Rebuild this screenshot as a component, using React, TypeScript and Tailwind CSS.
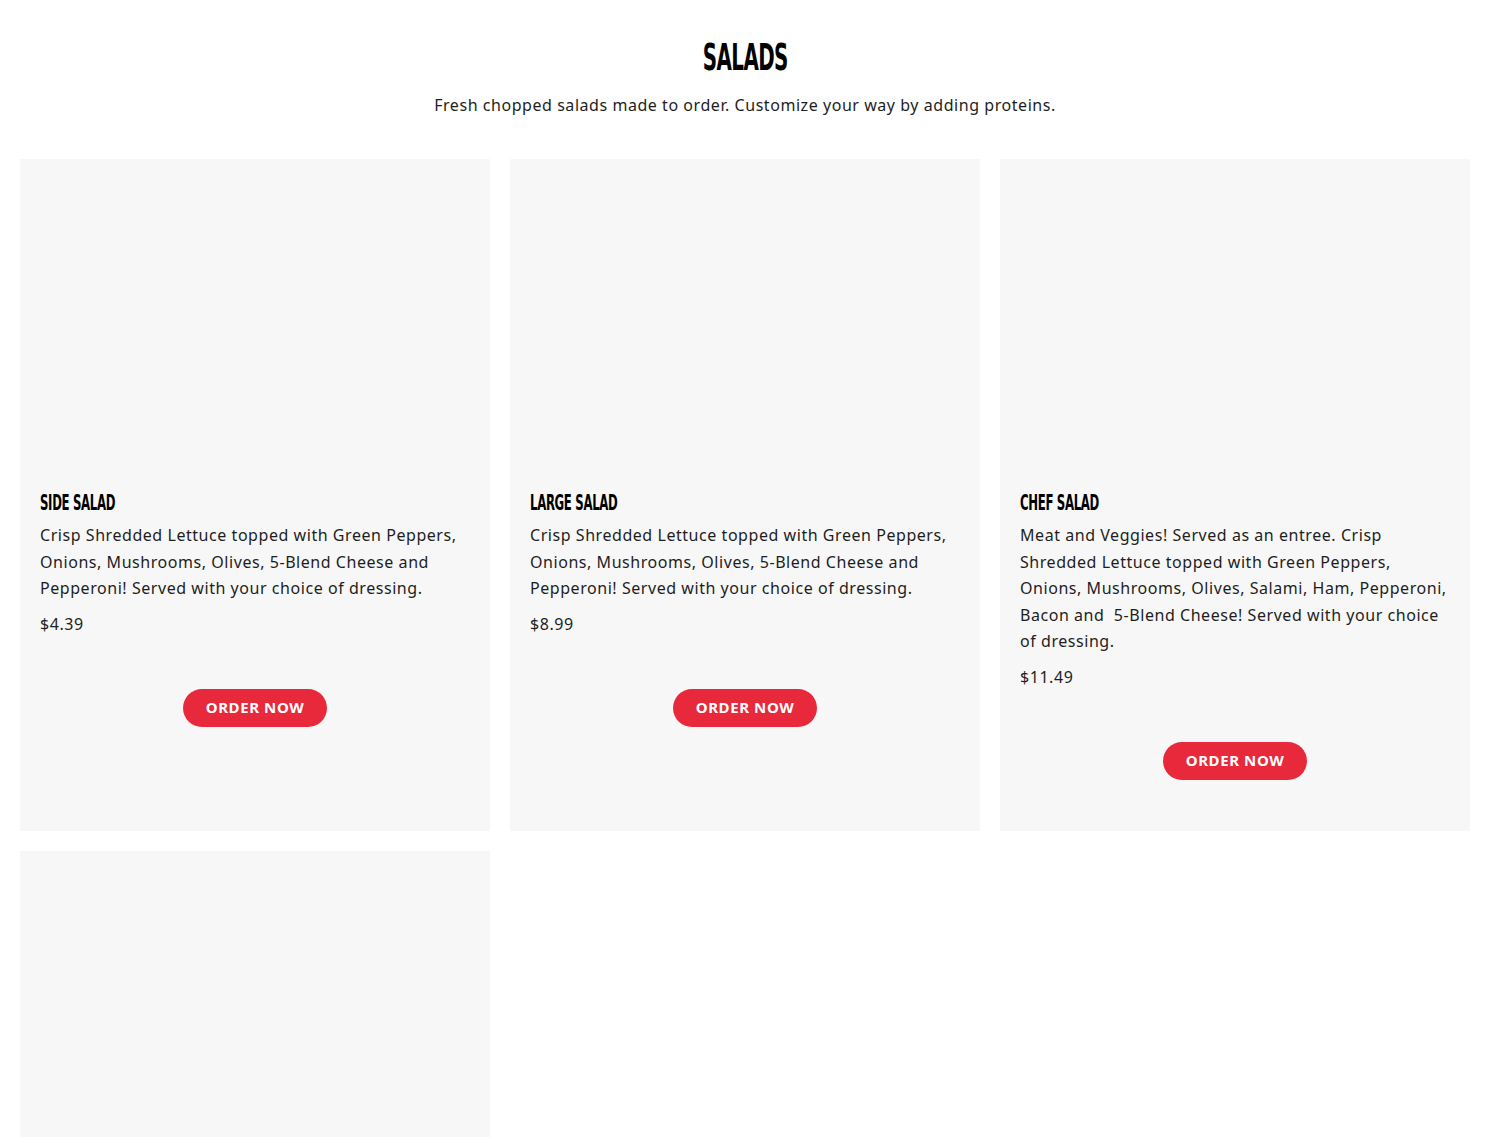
import React from 'react'

interface Salad {
  name: string
  description: string
  price: string
}

const salads: Salad[] = [
  {
    name: 'Side Salad',
    description:
      'Crisp Shredded Lettuce topped with Green Peppers, Onions, Mushrooms, Olives, 5-Blend Cheese and Pepperoni! Served with your choice of dressing.',
    price: '$4.39',
  },
  {
    name: 'Large Salad',
    description:
      'Crisp Shredded Lettuce topped with Green Peppers, Onions, Mushrooms, Olives, 5-Blend Cheese and Pepperoni! Served with your choice of dressing.',
    price: '$8.99',
  },
  {
    name: 'Chef Salad',
    description:
      'Meat and Veggies! Served as an entree. Crisp Shredded Lettuce topped with Green Peppers, Onions, Mushrooms, Olives, Salami, Ham, Pepperoni, Bacon and \u00a05-Blend Cheese! Served with your choice of dressing.',
    price: '$11.49',
  },
]

const bodyFont = { fontFamily: '"Noto Sans", "DejaVu Sans", sans-serif' }

const Heading: React.FC<{ children: React.ReactNode; className?: string }> = ({
  children,
  className,
}) => (
  <span
    className={`inline-block font-bold uppercase tracking-tight ${className ?? ''}`}
    style={{ fontFamily: '"DejaVu Sans Condensed", "DejaVu Sans", sans-serif' }}
  >
    {children}
  </span>
)

const SaladCard: React.FC<{ salad: Salad }> = ({ salad }) => (
  <div className="flex flex-col bg-[#f7f7f7]">
    <div className="h-[310px]" />
    <div className="px-5 pt-5 pb-[51px]">
      <h3 className="h-[26px] text-[21px] leading-[26px] text-black">
        <Heading className="origin-left scale-x-[0.62]">{salad.name}</Heading>
      </h3>
      <p className="mt-[7px] text-[16px] leading-[26.5px] tracking-[0.55px] text-[#1e1e1e]">
        {salad.description}
      </p>
      <p className="mt-[9px] text-[16px] leading-[26px] tracking-[0.55px] text-[#1e1e1e]">
        {salad.price}
      </p>
      <div className="mt-[52px] flex justify-center">
        <button className="h-[38px] w-[144px] rounded-full bg-[#e8293b] text-[15px] font-bold uppercase tracking-[0.6px] text-white">
          Order Now
        </button>
      </div>
    </div>
  </div>
)

export default function App() {
  return (
    <div className="min-h-screen bg-white" style={bodyFont}>
      <div className="w-[1490px]">
        <div className="pt-[33px] text-center">
          <h2 className="h-[44px] text-[38px] leading-[44px] text-black">
            <Heading className="origin-center scale-x-[0.58]">Salads</Heading>
          </h2>
          <p className="mt-[17px] text-[16px] leading-[22px] tracking-[0.55px] text-[#1e1e1e]">
            Fresh chopped salads made to order. Customize your way by adding proteins.
          </p>
        </div>
        <div className="mt-[43px] grid grid-cols-3 gap-5 px-5">
          {salads.map((s) => (
            <SaladCard key={s.name} salad={s} />
          ))}
          <div className="h-[300px] bg-[#f7f7f7]" />
        </div>
      </div>
    </div>
  )
}
